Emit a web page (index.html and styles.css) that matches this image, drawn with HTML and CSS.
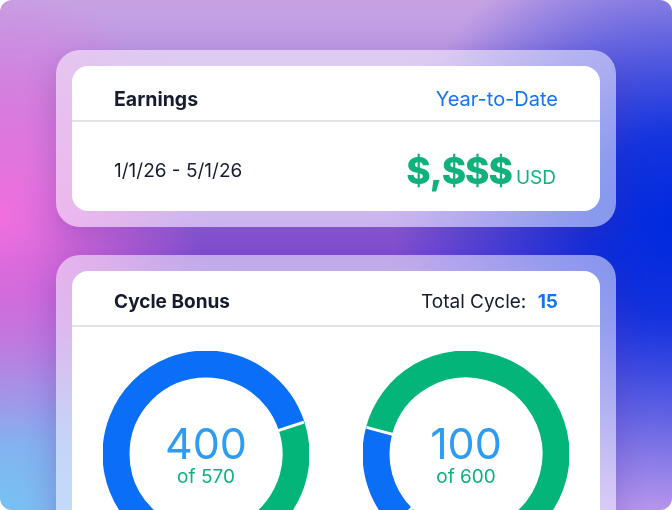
FILE: index.html
```html
<!DOCTYPE html>
<html>
<head>
<meta charset="UTF-8">
<link rel="stylesheet" href="styles.css">
<title>Earnings</title>
</head>
<body>
<div class="screen">

    <!-- Earnings card -->
    <section class="frame earnings">
        <div class="card">
            <div class="card-head">
                <h2>Earnings</h2>
                <span class="link">Year-to-Date</span>
            </div>
            <div class="earnings-row">
                <span class="dates">1/1/26 - 5/1/26</span>
                <span class="amount"><b>$,$$$</b><small>USD</small></span>
            </div>
        </div>
    </section>

    <!-- Cycle bonus card -->
    <section class="frame bonus">
        <div class="card">
            <div class="card-head">
                <h2>Cycle Bonus</h2>
                <span class="total">Total Cycle: <b>15</b></span>
            </div>
            <div class="donuts">
                <div class="donut">
                    <svg viewBox="0 0 206 206" width="206" height="206">
                        <circle class="seg green" cx="103" cy="103" r="90" stroke-dasharray="169.6 565.5" transform="rotate(-18 103 103)"/>
                        <circle class="seg blue" cx="103" cy="103" r="90" stroke-dasharray="395.8 565.5" transform="rotate(90 103 103)"/>
                        <line class="cut" x1="103" y1="103" x2="103" y2="0" transform="rotate(72 103 103)"/>
                        <line class="cut" x1="103" y1="103" x2="103" y2="0" transform="rotate(180 103 103)"/>
                        <circle cx="103" cy="103" r="76" fill="#fff"/>
                    </svg>
                    <div class="donut-label"><span class="num">400</span><span class="of">of 570</span></div>
                </div>
                <div class="donut">
                    <svg viewBox="0 0 206 206" width="206" height="206">
                        <circle class="seg blue" cx="103" cy="103" r="90" stroke-dasharray="94.25 565.5" transform="rotate(135 103 103)"/>
                        <circle class="seg green" cx="103" cy="103" r="90" stroke-dasharray="471.2 565.5" transform="rotate(195 103 103)"/>
                        <line class="cut" x1="103" y1="103" x2="103" y2="0" transform="rotate(285 103 103)"/>
                        <line class="cut" x1="103" y1="103" x2="103" y2="0" transform="rotate(225 103 103)"/>
                        <circle cx="103" cy="103" r="76" fill="#fff"/>
                    </svg>
                    <div class="donut-label"><span class="num">100</span><span class="of">of 600</span></div>
                </div>
            </div>
        </div>
    </section>

</div>
</body>
</html>
```

FILE: styles.css
```css
*{
    box-sizing: border-box;
}
html, body{
    margin: 0;
    background: #fff;
}
body{
    font-family: Inter, "Liberation Sans", sans-serif;
    color: #161c2d;
}
.screen{
    width: 672px;
    height: 510px;
    overflow: hidden;
    border-radius: 12px;
    padding: 50px 56px 0;
    display: flex;
    flex-direction: column;
    gap: 28px;
    background:
        radial-gradient(ellipse 280px 300px at 100% 44%, #0029de 0%, rgba(4,44,222,0.9) 30%, rgba(20,50,220,0) 100%),
        radial-gradient(ellipse 200px 230px at 0% 42%, #f070de 0%, rgba(236,112,220,0.6) 50%, rgba(236,112,220,0) 100%),
        radial-gradient(ellipse 220px 220px at 0% 100%, #74c2f4 0%, rgba(116,194,244,0.5) 50%, rgba(116,194,244,0) 100%),
        radial-gradient(ellipse 240px 200px at 100% 100%, #c29cec 0%, rgba(194,156,236,0) 100%),
        linear-gradient(180deg, #c6a2e4 0%, #a982df 35%, #8450d6 50%, #9c80e4 75%, #b09aea 100%);
}
.frame{
    flex: none;
    padding: 16px;
    border-radius: 24px;
    background: rgba(255,255,255,0.5);
    backdrop-filter: blur(20px);
    box-shadow: 0 10px 30px rgba(70,20,140,0.25);
}
.card{
    background: #fff;
    border-radius: 16px;
    overflow: hidden;
}
.card-head{
    height: 56px;
    padding: 6px 42px 0;
    display: flex;
    align-items: center;
    justify-content: space-between;
    border-bottom: 2px solid #e3e3e6;
}
.earnings .card-head{
    padding-top: 12px;
}
h2{
    margin: 0;
    font-size: 19.5px;
    font-weight: 700;
}
.bonus h2{
    font-size: 19px;
}
.link{
    font-size: 20px;
    color: #1574f2;
}
.total{
    font-size: 19px;
}
.total b{
    color: #1574f2;
    margin-left: 6px;
}
.earnings-row{
    height: 89px;
    padding: 8px 44px 0 42px;
    display: flex;
    align-items: center;
    justify-content: space-between;
}
.dates{
    font-size: 19px;
}
.amount{
    color: #0fb27a;
    display: flex;
    align-items: baseline;
    gap: 4px;
}
.amount b{
    font-size: 37px;
    font-weight: 800;
    letter-spacing: -1px;
}
.amount small{
    font-size: 19px;
}
.donuts{
    padding-top: 24px;
    display: flex;
    justify-content: center;
    gap: 54px;
}
.donut{
    position: relative;
    width: 206px;
    height: 206px;
}
.donut svg{
    display: block;
}
.seg{
    fill: none;
    stroke-width: 27;
}
.seg.blue{
    stroke: #0a6ef6;
}
.seg.green{
    stroke: #04b57a;
}
.cut{
    stroke: #fff;
    stroke-width: 3;
}
.donut-label{
    position: absolute;
    inset: 0;
    display: flex;
    flex-direction: column;
    align-items: center;
    justify-content: center;
    padding-top: 2px;
}
.num{
    font-size: 43px;
    line-height: 44px;
    color: #2f9cf4;
}
.of{
    font-size: 19px;
    line-height: 24px;
    color: #0fb27a;
}
```
